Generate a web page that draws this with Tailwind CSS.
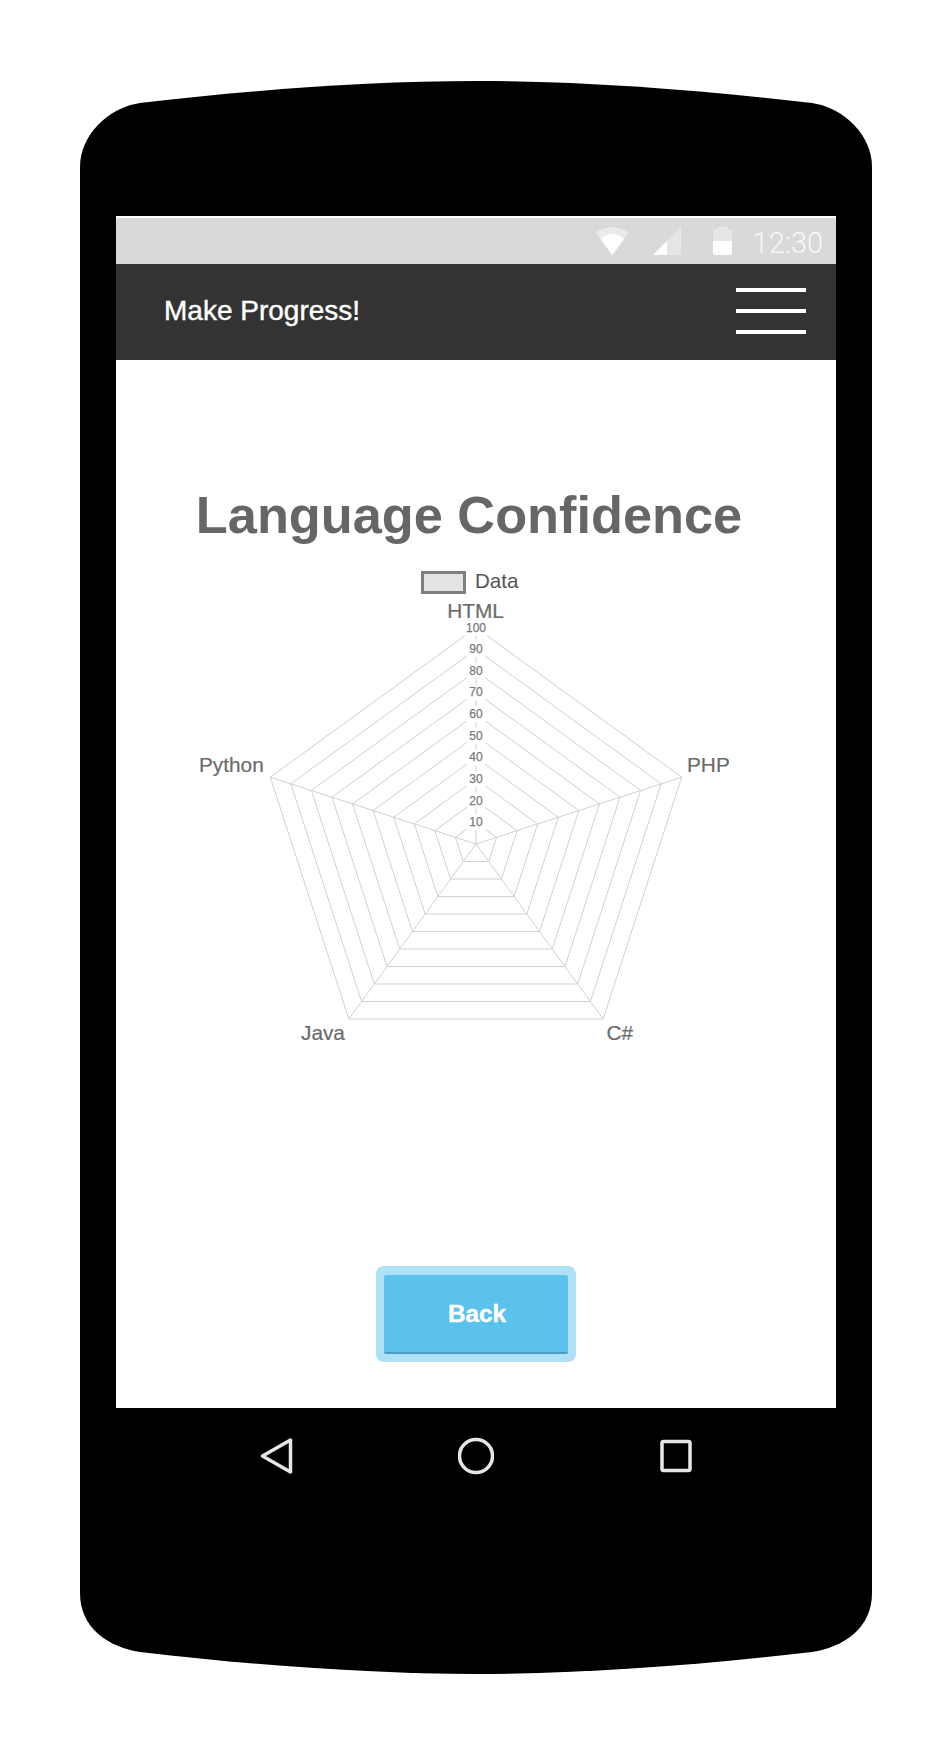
<!DOCTYPE html>
<html lang="en">
<head>
    <meta charset="UTF-8">
    <meta name="viewport" content="width=device-width, initial-scale=1.0">
    <title>Language Confidence</title>
    <script src="https://cdn.jsdelivr.net/npm/@tailwindcss/browser@4"></script>
</head>
<body class="bg-white font-['Liberation_Sans',Arial,sans-serif]">
    <div class="relative w-[952px] h-[1756px] overflow-hidden">
        <!-- phone body -->
        <svg class="absolute inset-0" width="952" height="1756" viewBox="0 0 952 1756">
            <path fill="#000" d="M80 167 C80 135 108 108 140 103 C250 90 370 81 476 81 C582 81 702 90 812 103 C844 108 872 135 872 167 L872 1593 C872 1628 844 1647 812 1652 C702 1665 582 1674 476 1674 C370 1674 250 1665 140 1652 C108 1647 80 1628 80 1593 Z"/>
        </svg>

        <div class="relative ml-[116px] pt-[216px] w-[720px]">
            <!-- status bar -->
            <div class="h-[48px] bg-[#d9d9d9] border-t-2 border-white flex items-center justify-end pr-[13px]">
                <svg class="mr-[21px]" width="136" height="30" viewBox="596 227 136 30">
                    <path fill="#fff" fill-opacity="0.45" d="M596 233.5 Q612 222.5 628 233.5 L612.3 256 Z"/>
                    <path fill="#fff" d="M600.5 240 Q612 230 624 240 L612.3 256 Z"/>
                    <path fill="#fff" fill-opacity="0.35" d="M653 256 L681 228 L681 256 Z"/>
                    <path fill="#fff" d="M653 256 L667 242 L667 256 Z"/>
                    <path fill="#fff" fill-opacity="0.35" d="M713 232 Q713 230 716 230 L718 230 L718 228 L727 228 L727 230 L729 230 Q732 230 732 232 L732 242 L713 242 Z"/>
                    <path fill="#fff" d="M713 242 L732 242 L732 254 Q732 256 730 256 L715 256 Q713 256 713 254 Z"/>
                </svg>
                <span class="font-['Roboto',sans-serif] font-light text-[29px] leading-none text-[#f7f7f7] pt-[4px]">12:30</span>
            </div>

            <!-- app bar -->
            <div class="h-[96px] bg-[#333333] flex items-center justify-between pl-[48px] pr-[30px]">
                <span class="text-[28px] leading-none text-white pb-[3px] [-webkit-text-stroke:0.4px_white]">Make Progress!</span>
                <div class="w-[70px] flex flex-col gap-[17px] pb-[3px]">
                    <div class="h-[4px] bg-white"></div>
                    <div class="h-[4px] bg-white"></div>
                    <div class="h-[4px] bg-white"></div>
                </div>
            </div>

            <!-- content -->
            <div class="h-[1048px] bg-white">
                <h1 class="pt-[125px] pr-[14px] text-center text-[52.3px] leading-[60px] font-bold text-[#666666]">Language Confidence</h1>

                <div class="mt-[26px] ml-[305px] flex items-center gap-[9px] h-[23px]">
                    <div class="w-[45px] h-[23px] bg-[#e3e3e3] border-[3px] border-[#7f7f7f]"></div>
                    <span class="text-[20.6px] leading-none text-[#555555] pb-[2px]">Data</span>
                </div>

                <svg class="block mt-[6px]" width="720" height="450" viewBox="116 600 720 450">
                    <g id="grid" fill="none" stroke="#d0d0d0" stroke-width="1"></g>
                    <g fill="#fff">
                        <rect x="464" y="619.7" width="24" height="16"/>
                        <rect x="467" y="641.3" width="18" height="16"/>
                        <rect x="467" y="663" width="18" height="16"/>
                        <rect x="467" y="684.6" width="18" height="16"/>
                        <rect x="467" y="706.2" width="18" height="16"/>
                        <rect x="467" y="727.9" width="18" height="16"/>
                        <rect x="467" y="749.5" width="18" height="16"/>
                        <rect x="467" y="771.1" width="18" height="16"/>
                        <rect x="467" y="792.7" width="18" height="16"/>
                        <rect x="467" y="814.4" width="18" height="16"/>
                    </g>
                    <g fill="#7a7a7a" stroke="#7a7a7a" stroke-width="0.25" font-size="12" text-anchor="middle">
                        <text x="476" y="631.5">100</text>
                        <text x="476" y="653.1">90</text>
                        <text x="476" y="674.8">80</text>
                        <text x="476" y="696.4">70</text>
                        <text x="476" y="718">60</text>
                        <text x="476" y="739.7">50</text>
                        <text x="476" y="761.3">40</text>
                        <text x="476" y="782.9">30</text>
                        <text x="476" y="804.5">20</text>
                        <text x="476" y="826.2">10</text>
                    </g>
                    <g fill="#6b6b6b" stroke="#6b6b6b" stroke-width="0.2" font-size="20.8">
                        <text x="475.5" y="618" text-anchor="middle">HTML</text>
                        <text x="687" y="771.5">PHP</text>
                        <text x="606.5" y="1039.5">C#</text>
                        <text x="301" y="1039.5">Java</text>
                        <text x="199" y="771.5">Python</text>
                    </g>
                </svg>

                <div class="mt-[216px] mx-auto w-[200px] h-[96px] rounded-[8px] bg-[#aee1f5] pt-[9px] px-[8px]">
                    <button class="w-[184px] h-[79px] bg-[#5bc2eb] border-b-2 border-[#4c9fc4] rounded-[2px] pt-[2px] pl-[2px] text-[24.3px] font-bold text-white [-webkit-text-stroke:0.4px_white]">Back</button>
                </div>
            </div>

            <!-- nav buttons -->
            <div class="flex justify-center items-center gap-[164px] pt-[29px]">
                <svg width="36" height="38" viewBox="258.5 1437 36 38" fill="none" stroke="#e6e6e6" stroke-width="3.5" stroke-linejoin="round">
                    <path d="M263 1456 L291 1440 L291 1472 Z"/>
                </svg>
                <svg width="36" height="38" viewBox="458 1437 36 38" fill="none" stroke="#e6e6e6" stroke-width="3.5">
                    <circle cx="476" cy="1456" r="16.5"/>
                </svg>
                <svg width="36" height="38" viewBox="658.5 1437 36 38" fill="none" stroke="#e6e6e6" stroke-width="3.5" stroke-linejoin="round">
                    <rect x="662.5" y="1441.5" width="28" height="29" rx="1.5"/>
                </svg>
            </div>
        </div>
    </div>

    <script>
        // radar grid: ten pentagons plus the spokes
        const cx = 476, cy = 844, step = 21.63;
        const dirs = [[0, -1], [0.9511, -0.309], [0.5878, 0.809], [-0.5878, 0.809], [-0.9511, -0.309]];
        const grid = document.getElementById('grid');
        const ns = 'http://www.w3.org/2000/svg';

        for (let k = 1; k <= 10; k++) {
            const poly = document.createElementNS(ns, 'polygon');
            poly.setAttribute('points', dirs.map(d => (cx + d[0] * k * step) + ',' + (cy + d[1] * k * step)).join(' '));
            grid.appendChild(poly);
        }
        dirs.forEach(d => {
            const spoke = document.createElementNS(ns, 'line');
            spoke.setAttribute('x1', cx);
            spoke.setAttribute('y1', cy);
            spoke.setAttribute('x2', cx + d[0] * 10 * step);
            spoke.setAttribute('y2', cy + d[1] * 10 * step);
            grid.appendChild(spoke);
        });
    </script>
</body>
</html>
